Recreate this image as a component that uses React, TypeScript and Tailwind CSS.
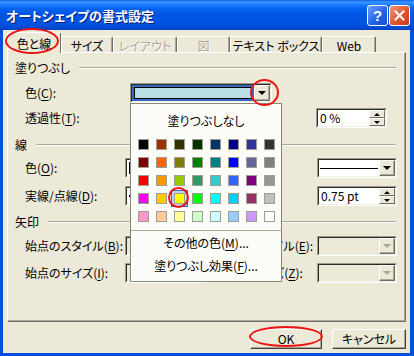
import React from 'react'

const font = "font-['Noto_Sans_CJK_JP','Noto_Sans',sans-serif] [font-feature-settings:'palt']"

const palette = [
    ['bg-[#000000]', 'bg-[#993300]', 'bg-[#333300]', 'bg-[#003300]', 'bg-[#003366]', 'bg-[#000080]', 'bg-[#333399]', 'bg-[#333333]'],
    ['bg-[#800000]', 'bg-[#ff6600]', 'bg-[#808000]', 'bg-[#008000]', 'bg-[#008080]', 'bg-[#0000ff]', 'bg-[#666699]', 'bg-[#808080]'],
    ['bg-[#ff0000]', 'bg-[#ff9900]', 'bg-[#99cc00]', 'bg-[#339966]', 'bg-[#33cccc]', 'bg-[#3366ff]', 'bg-[#800080]', 'bg-[#969696]'],
    ['bg-[#ff00ff]', 'bg-[#ffcc00]', 'bg-[#ffff00]', 'bg-[#00ff00]', 'bg-[#00ffff]', 'bg-[#00ccff]', 'bg-[#993366]', 'bg-[#c0c0c0]'],
    ['bg-[#ff99cc]', 'bg-[#ffcc99]', 'bg-[#ffff99]', 'bg-[#ccffcc]', 'bg-[#ccffff]', 'bg-[#99ccff]', 'bg-[#cc99ff]', 'bg-[#ffffff]'],
]

const tabs = [
    { label: '色と線', w: 'w-[54px]', active: true },
    { label: 'サイズ', w: 'w-[52px]' },
    { label: 'レイアウト', w: 'w-[64px]', disabled: true },
    { label: '図', w: 'w-[53px]', disabled: true },
    { label: 'テキスト ボックス', w: 'w-[92px]' },
    { label: 'Web', w: 'w-[54px]' },
]

const Mn = ({ children }: { children: React.ReactNode }) => (
    <u className="underline underline-offset-[2px]">{children}</u>
)

const DownArrow = ({ disabled }: { disabled?: boolean }) => (
    <span className={`w-0 h-0 border-x-[4px] border-t-[4px] border-x-transparent ${disabled ? 'border-t-[#aca899]' : 'border-t-black'}`} />
)

const ArrowBtn = ({ disabled }: { disabled?: boolean }) => (
    <div className="w-[16px] h-full flex items-center justify-center bg-[#ece9d8] border border-t-white border-l-white border-r-[#716f64] border-b-[#716f64] shadow-[inset_-1px_-1px_#aca899]">
        <DownArrow disabled={disabled} />
    </div>
)

const Field = ({ className, bg = 'bg-white', children }: { className: string; bg?: string; children?: React.ReactNode }) => (
    <div className={`h-[20px] border border-t-[#9d9a8e] border-l-[#9d9a8e] border-r-white border-b-white ${className}`}>
        <div className={`h-full flex border border-t-[#2b2a26] border-l-[#2b2a26] border-r-[#f1efe2] border-b-[#f1efe2] ${bg}`}>
            {children}
        </div>
    </div>
)

const SpinBtn = ({ up }: { up?: boolean }) => (
    <div className="flex-1 flex items-center justify-center bg-[#ece9d8] border border-t-white border-l-white border-r-[#716f64] border-b-[#716f64]">
        <span className={`w-0 h-0 border-x-[3px] border-x-transparent ${up ? 'border-b-[3px] border-b-black' : 'border-t-[3px] border-t-black'}`} />
    </div>
)

const Spin = ({ value, className }: { value: string; className: string }) => (
    <Field className={className}>
        <span className="flex-1 flex items-center pl-[2px]">{value}</span>
        <div className="w-[16px] flex flex-col">
            <SpinBtn up />
            <SpinBtn />
        </div>
    </Field>
)

const Header = ({ label, mt }: { label: string; mt: string }) => (
    <div className={`flex items-center h-[14px] pl-[7px] pr-[9px] ${mt}`}>
        <span>{label}</span>
        <div className="flex-1 ml-[9px] h-0 border-t border-t-[#aca899] border-b border-b-white" />
    </div>
)

const Ring = ({ className }: { className: string }) => (
    <div className={`absolute border-2 border-[#ec1313] rounded-[50%] ${className}`} />
)

const Button = ({ w, children }: { w: string; children: React.ReactNode }) => (
    <div className={`${w} h-[20px] flex items-center justify-center bg-[#ece9d8] border border-t-white border-l-white border-r-[#404040] border-b-[#404040] shadow-[inset_-1px_-1px_#aca899]`}>
        {children}
    </div>
)

const TitleBar = () => (
    <div className="h-[30px] flex items-center pl-[6px] pr-[4px] bg-[linear-gradient(180deg,#0a5ee8_0px,#3d95ff_2px,#1f83ff_4px,#0765f2_8px,#0055e5_14px,#0054e3_22px,#0050dc_26px,#0041c0_30px)]">
        <span className="text-white font-bold text-[13px] [text-shadow:1px_1px_0_#0a1a7a]">オートシェイプの書式設定</span>
        <div className="ml-auto flex gap-[1px]">
            <div className="w-[21px] h-[21px] rounded-[3px] border border-white bg-[linear-gradient(135deg,#6fa3ff,#2463e6_55%,#1a4fd0)] flex items-center justify-center">
                <span className="text-white font-bold text-[15px] font-['Liberation_Sans',sans-serif]">?</span>
            </div>
            <div className="w-[21px] h-[21px] rounded-[3px] border border-white bg-[linear-gradient(135deg,#f29a7e,#e0532f_55%,#c73e18)] flex items-center justify-center">
                <svg width="11" height="11" viewBox="0 0 11 11">
                    <path d="M1.5 1.5 L9.5 9.5 M9.5 1.5 L1.5 9.5" stroke="white" strokeWidth="2" strokeLinecap="square" />
                </svg>
            </div>
        </div>
    </div>
)

const Tabs = () => (
    <div className="flex items-end h-[21px] -mb-px relative z-10">
        {tabs.map((t) =>
            t.active ? (
                <div key={t.label} className={`${t.w} h-[21px] flex justify-center pt-[5px] bg-[#ece9d8] border-t border-l border-r border-t-white border-l-white border-r-[#716f64] rounded-t-[2px]`}>
                    {t.label}
                </div>
            ) : (
                <div
                    key={t.label}
                    className={`${t.w} h-[16px] mb-px flex justify-center pt-[3px] border-t border-l border-r border-t-white border-l-white border-r-[#716f64] shadow-[inset_-1px_0_#aca899] rounded-t-[2px] ${t.disabled ? 'text-[#aca899] [text-shadow:1px_1px_0_#ffffff]' : ''}`}
                >
                    {t.label}
                </div>
            )
        )}
    </div>
)

const Panel = () => (
    <div className="h-[270px] flex flex-col border border-t-white border-l-white border-r-[#716f64] border-b-[#716f64] shadow-[inset_-1px_-1px_#aca899]">
        <Header label="塗りつぶし" mt="mt-[8px]" />
        <div className="flex items-center h-[20px] mt-[8px] pl-[17px]">
            <span className="w-[105px]">色(<Mn>C</Mn>):</span>
            <Field className="w-[142px]">
                <div className="flex-1 bg-[#316ac5] p-[2px]">
                    <div className="h-full border border-black bg-[#b8e0e4]" />
                </div>
                <ArrowBtn />
            </Field>
        </div>
        <div className="flex items-center h-[20px] mt-[5px] pl-[17px]">
            <span className="w-[291px]">透過性(<Mn>T</Mn>):</span>
            <Spin value="0 %" className="w-[71px]" />
        </div>

        <Header label="線" mt="mt-[10px]" />
        <div className="flex items-center h-[20px] mt-[6px] pl-[17px]">
            <span className="w-[100px]">色(<Mn>O</Mn>):</span>
            <Field className="w-[81px]">
                <div className="flex-1 p-[2px]">
                    <div className="h-full bg-black" />
                </div>
                <ArrowBtn />
            </Field>
            <div className="ml-[8px] w-[103px]" />
            <Field className="w-[80px]">
                <div className="flex-1 flex items-center px-[1px]">
                    <div className="w-full h-px bg-black" />
                </div>
                <ArrowBtn />
            </Field>
        </div>
        <div className="flex items-center h-[20px] mt-[8px] pl-[17px]">
            <span className="w-[100px]">実線/点線(<Mn>D</Mn>):</span>
            <Field className="w-[81px]">
                <div className="flex-1 flex items-center px-[2px]">
                    <div className="w-full h-[2px] bg-black" />
                </div>
                <ArrowBtn />
            </Field>
            <div className="ml-[8px] w-[103px]" />
            <Spin value="0.75 pt" className="w-[80px]" />
        </div>

        <Header label="矢印" mt="mt-[9px]" />
        <div className="flex items-center h-[20px] mt-[7px] pl-[17px]">
            <span className="w-[100px]">始点のスタイル(<Mn>B</Mn>):</span>
            <Field className="w-[81px]" bg="bg-[#ece9d8]">
                <div className="flex-1" />
                <ArrowBtn disabled />
            </Field>
            <span className="ml-[10px] w-[101px] whitespace-nowrap">終点のスタイル(<Mn>E</Mn>):</span>
            <Field className="w-[80px]" bg="bg-[#ece9d8]">
                <div className="flex-1" />
                <ArrowBtn disabled />
            </Field>
        </div>
        <div className="flex items-center h-[20px] mt-[7px] pl-[17px]">
            <span className="w-[100px]">始点のサイズ(<Mn>I</Mn>):</span>
            <Field className="w-[81px]" bg="bg-[#ece9d8]">
                <div className="flex-1" />
                <ArrowBtn disabled />
            </Field>
            <span className="ml-[10px] w-[101px] whitespace-nowrap">終点のサイズ(<Mn>Z</Mn>):</span>
            <Field className="w-[80px]" bg="bg-[#ece9d8]">
                <div className="flex-1" />
                <ArrowBtn disabled />
            </Field>
        </div>
    </div>
)

const ColorPopup = () => (
    <div className="absolute left-[130px] top-[103px] w-[152px] h-[179px] border border-[#8a867a] bg-[#fcfcf9] flex flex-col items-center z-20">
        <div className="h-[14px] mt-[10px] flex items-center">塗りつぶしなし</div>
        <div className="mt-[11px] grid grid-cols-[repeat(8,11px)] gap-[7px]">
            {palette.flat().map((c, i) => (
                <div key={i} className="relative w-[11px] h-[11px]">
                    {i === 26 && <div className="absolute -inset-[3px] border border-[#316ac5] bg-[#c1d2ee]" />}
                    <div className={`absolute inset-0 border border-[#a09d95] ${c}`} />
                </div>
            ))}
        </div>
        <div className="mt-[8px] w-full h-px bg-[#aca899]" />
        <div className="h-[14px] mt-[5px] flex items-center">その他の色(<Mn>M</Mn>)...</div>
        <div className="h-[14px] mt-[9px] flex items-center">塗りつぶし効果(<Mn>F</Mn>)...</div>
    </div>
)

export default function App() {
    return (
        <div className={`relative w-[414px] h-[356px] overflow-hidden flex flex-col bg-[#0a4fdc] text-[12px] leading-none text-black ${font}`}>
            <TitleBar />
            <div className="flex-1 ml-[3px] mr-[4px] mb-[3px] bg-[#ece9d8] flex flex-col px-[4px] pt-[2px]">
                <Tabs />
                <Panel />
                <div className="flex justify-end gap-[10px] mt-[7px]">
                    <Button w="w-[72px]">OK</Button>
                    <Button w="w-[74px]">キャンセル</Button>
                </div>
            </div>
            <ColorPopup />
            <Ring className="left-[5px] top-[28px] w-[54px] h-[26px] z-30" />
            <Ring className="left-[250px] top-[79px] w-[29px] h-[27px] z-30" />
            <Ring className="left-[168px] top-[187px] w-[21px] h-[21px] z-30" />
            <Ring className="left-[249px] top-[326px] w-[74px] h-[21px] z-30" />
        </div>
    )
}
